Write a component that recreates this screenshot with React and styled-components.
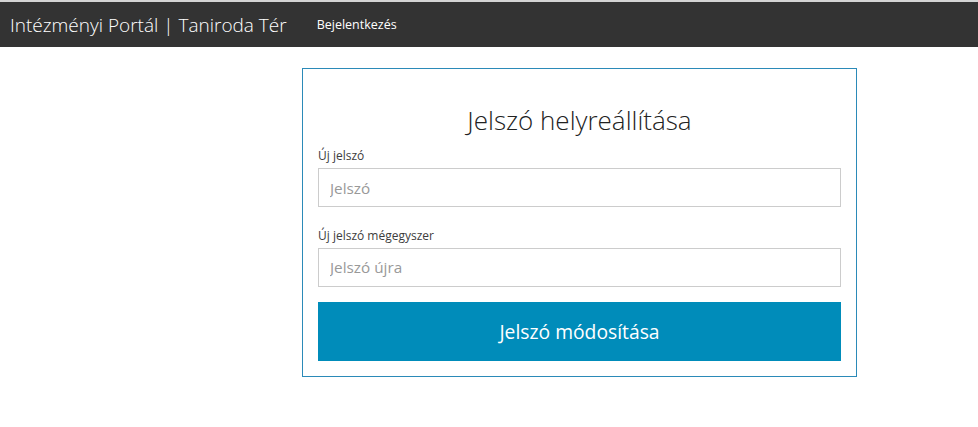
import styled, { createGlobalStyle } from 'styled-components'

const GlobalStyle = createGlobalStyle`
	* { box-sizing: border-box; }
	body {
		margin: 0;
		background: #fff;
		font-family: 'Open Sans', 'Liberation Sans', sans-serif;
		color: #222;
	}
`

function App() {
	return (
		<>
			<GlobalStyle />
			<TopBar>
				<BrandTitle>Intézményi Portál | Taniroda Tér</BrandTitle>
				<NavLink>Bejelentkezés</NavLink>
			</TopBar>
			<Main>
				<Card>
					<CardTitle>Jelszó helyreállítása</CardTitle>
					<Field>
						<Label>Új jelszó</Label>
						<Input type="password" placeholder="Jelszó" />
					</Field>
					<Field>
						<Label>Új jelszó mégegyszer</Label>
						<Input type="password" placeholder="Jelszó újra" />
					</Field>
					<SubmitBtn>Jelszó módosítása</SubmitBtn>
				</Card>
			</Main>
		</>
	)
}

const TopBar = styled.div`
	display: flex;
	align-items: center;
	height: 47px;
	border-top: 2px solid #d4d4d4;
	background-color: #333333;
	padding: 0px 10px;
`

const BrandTitle = styled.div`
	color: #fff;
	font-size: 19px;
	font-weight: 300;
	margin-right: 30px;
`

const NavLink = styled.a`
	color: #fff;
	font-size: 12.5px;
	cursor: pointer;
`

const Main = styled.div`
	padding: 21px 0px 0px 302px;
`

const Card = styled.div`
	width: 555px;
	border: 1px solid #2b8ab8;
	padding: 15px;
	display: flex;
	flex-direction: column;
`

const CardTitle = styled.h2`
	margin: 18px 0px 10px;
	text-align: center;
	font-size: 26px;
	font-weight: 300;
	color: #222;
	line-height: 1.4;
`

const Field = styled.div`
	display: flex;
	flex-direction: column;
	margin-bottom: 21px;
`

const Label = styled.label`
	font-size: 12px;
	color: #3d3d3d;
	line-height: 1.4;
	margin-bottom: 3px;
`

const Input = styled.input`
	height: 39px;
	border: 1px solid #cccccc;
	padding: 0px 11px;
	font-family: 'Open Sans', 'Liberation Sans', sans-serif;
	font-size: 15.3px;
	color: #333;
	outline: none;
	&::placeholder {
		color: #999;
	}
`

const SubmitBtn = styled.button`
	height: 59px;
	margin-top: -6px;
	border: none;
	background: #008cba;
	color: #fff;
	font-family: 'Open Sans', 'Liberation Sans', sans-serif;
	font-size: 19.3px;
	cursor: pointer;
`

export default App
